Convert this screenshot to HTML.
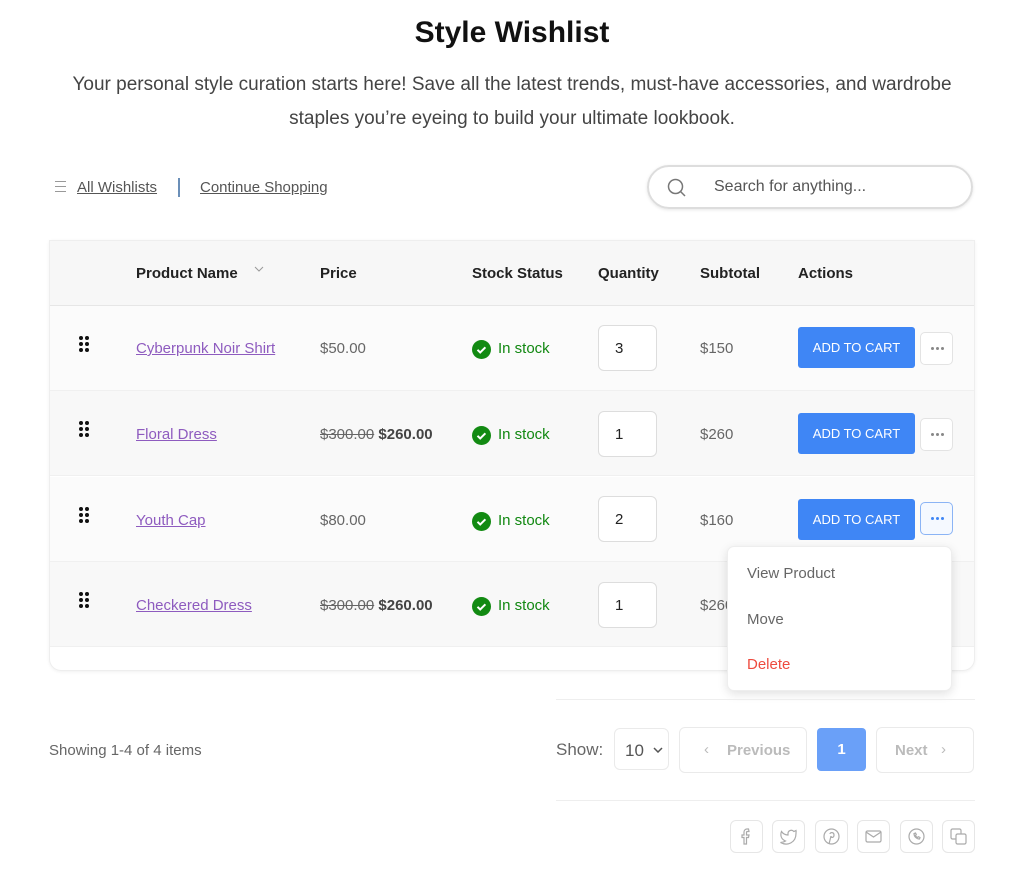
<!DOCTYPE html>
<html><head><meta charset="utf-8"><style>
*{box-sizing:border-box;margin:0;padding:0}
body{width:1024px;height:880px;background:#fff;font-family:"Liberation Sans",sans-serif;color:#333;position:relative;overflow:hidden}
.a{position:absolute}
h1{position:absolute;top:16px;left:0;width:1024px;text-align:center;font-size:30px;font-weight:bold;color:#111}
.sub{top:68px;left:60px;width:904px;text-align:center;font-size:19px;line-height:34px;color:#444}
.nav{top:179px;font-size:15px;color:#555;text-decoration:underline}
.search{left:647px;top:165px;width:326px;height:44px;border:2px solid #ddd;border-radius:22px;box-shadow:0 1px 3px rgba(0,0,0,.1)}
.table{left:49px;top:240px;width:926px;height:431px;border:1px solid #eee;border-radius:0 0 12px 12px;box-shadow:0 1px 3px rgba(0,0,0,.06);overflow:hidden}
.hd{position:absolute;left:0;top:0;width:100%;height:65px;background:#f7f7f7;border-bottom:1px solid #e6e6e6}
.th{position:absolute;top:24px;font-size:15px;font-weight:bold;color:#222}
.row{position:absolute;left:0;width:100%;height:85px;border-bottom:1px solid #f0f0f0}
.c{position:absolute;font-size:15px;color:#666}
.name{color:#8e5bbf;text-decoration:underline}
.ok{color:#118811}
.chk{position:absolute;width:19px;height:19px;border-radius:50%;background:#128a12}
.qty{position:absolute;width:59px;height:46px;border:1px solid #ddd;border-radius:6px;background:#fff;font-size:15px;color:#222;padding:14px 0 0 16px}
.btn{position:absolute;width:117px;height:41px;background:#3f86f5;border-radius:3px;color:#fff;font-size:13px;text-align:center;line-height:41px}
.dots{position:absolute;width:33px;height:33px;border:1px solid #e3e3e3;border-radius:5px;background:#fff}
.dots:before{content:"";position:absolute;left:10px;top:14px;width:3px;height:3px;border-radius:50%;background:#888;box-shadow:5px 0 #888,10px 0 #888}
.dots.on:before{background:#3f86f5;box-shadow:5px 0 #3f86f5,10px 0 #3f86f5}
.grip{position:absolute;width:9px;height:15px}
.grip i{position:absolute;width:4px;height:4px;border-radius:50%;background:#111}
.box{border:1px solid #eaeaea;border-radius:6px;background:#fff}
.soc{position:absolute;top:820px;width:33px;height:33px;border:1px solid #e6e6e6;border-radius:6px}
</style></head><body>
<h1>Style Wishlist</h1>
<div class="a sub">Your personal style curation starts here! Save all the latest trends, must-have accessories, and wardrobe staples you’re eyeing to build your ultimate lookbook.</div>
<div class="a" style="left:55px;top:181px;width:11px;height:11px;border-top:1px solid #999;border-bottom:1px solid #999"><div style="margin-top:4px;border-top:1px solid #999"></div></div>
<div class="a nav" style="left:77px">All Wishlists</div>
<div class="a" style="left:178px;top:178px;width:2px;height:19px;background:#6b8fb8"></div>
<div class="a nav" style="left:200px">Continue Shopping</div>
<div class="a search"><svg class="a" style="left:18px;top:11px" width="20" height="20" viewBox="0 0 20 20" fill="none" stroke="#777" stroke-width="1.5"><circle cx="8.5" cy="8.5" r="7"/><path d="M13.5 13.5L18 18"/></svg><span class="a" style="left:65px;top:11px;font-size:16px;color:#555">Search for anything...</span></div>

<div class="a table">
 <div class="hd">
  <div class="th" style="left:86px">Product Name</div>
  <svg class="a" style="left:204px;top:25px" width="10" height="6" viewBox="0 0 10 6" fill="none" stroke="#999"><path d="M1 1l4 4 4-4"/></svg>
  <div class="th" style="left:270px">Price</div>
  <div class="th" style="left:422px">Stock Status</div>
  <div class="th" style="left:548px">Quantity</div>
  <div class="th" style="left:650px">Subtotal</div>
  <div class="th" style="left:748px">Actions</div>
 </div>
 <div class="row" style="top:65px;background:#fbfbfb">
  <div class="grip" style="left:29px;top:30px"><i style="left:0;top:0"></i><i style="left:6px;top:0"></i><i style="left:0;top:6px"></i><i style="left:6px;top:6px"></i><i style="left:0;top:12px"></i><i style="left:6px;top:12px"></i></div>
  <div class="c name" style="left:86px;top:34px">Cyberpunk Noir Shirt</div>
  <div class="c" style="left:270px;top:34px">$50.00</div>
  <svg class="a" style="left:422px;top:34px" width="19" height="19" viewBox="0 0 19 19"><circle cx="9.5" cy="9.5" r="9.5" fill="#128a12"/><path d="M5.5 9.8l2.7 2.7 5.2-5.2" fill="none" stroke="#fff" stroke-width="2"/></svg><div class="c ok" style="left:448px;top:34px">In stock</div>
  <div class="qty" style="left:548px;top:19px">3</div>
  <div class="c" style="left:650px;top:34px">$150</div>
  <div class="btn" style="left:748px;top:21px">ADD TO CART</div>
  <div class="dots" style="left:870px;top:26px"></div>
 </div>
 <div class="row" style="top:150px;background:#f8f8f8">
  <div class="grip" style="left:29px;top:30px"><i style="left:0;top:0"></i><i style="left:6px;top:0"></i><i style="left:0;top:6px"></i><i style="left:6px;top:6px"></i><i style="left:0;top:12px"></i><i style="left:6px;top:12px"></i></div>
  <div class="c name" style="left:86px;top:35px">Floral Dress</div>
  <div class="c" style="left:270px;top:35px"><s>$300.00</s> <b style="color:#444">$260.00</b></div>
  <svg class="a" style="left:422px;top:35px" width="19" height="19" viewBox="0 0 19 19"><circle cx="9.5" cy="9.5" r="9.5" fill="#128a12"/><path d="M5.5 9.8l2.7 2.7 5.2-5.2" fill="none" stroke="#fff" stroke-width="2"/></svg><div class="c ok" style="left:448px;top:35px">In stock</div>
  <div class="qty" style="left:548px;top:20px">1</div>
  <div class="c" style="left:650px;top:35px">$260</div>
  <div class="btn" style="left:748px;top:22px">ADD TO CART</div>
  <div class="dots" style="left:870px;top:27px"></div>
 </div>
 <div class="row" style="top:236px;background:#fbfbfb">
  <div class="grip" style="left:29px;top:30px"><i style="left:0;top:0"></i><i style="left:6px;top:0"></i><i style="left:0;top:6px"></i><i style="left:6px;top:6px"></i><i style="left:0;top:12px"></i><i style="left:6px;top:12px"></i></div>
  <div class="c name" style="left:86px;top:35px">Youth Cap</div>
  <div class="c" style="left:270px;top:35px">$80.00</div>
  <svg class="a" style="left:422px;top:35px" width="19" height="19" viewBox="0 0 19 19"><circle cx="9.5" cy="9.5" r="9.5" fill="#128a12"/><path d="M5.5 9.8l2.7 2.7 5.2-5.2" fill="none" stroke="#fff" stroke-width="2"/></svg><div class="c ok" style="left:448px;top:35px">In stock</div>
  <div class="qty" style="left:548px;top:19px">2</div>
  <div class="c" style="left:650px;top:35px">$160</div>
  <div class="btn" style="left:748px;top:22px">ADD TO CART</div>
  <div class="dots on" style="left:870px;top:25px;border-color:#8bb4f5;background:#f5f9ff"></div>
 </div>
 <div class="row" style="top:321px;background:#f8f8f8">
  <div class="grip" style="left:29px;top:30px"><i style="left:0;top:0"></i><i style="left:6px;top:0"></i><i style="left:0;top:6px"></i><i style="left:6px;top:6px"></i><i style="left:0;top:12px"></i><i style="left:6px;top:12px"></i></div>
  <div class="c name" style="left:86px;top:35px">Checkered Dress</div>
  <div class="c" style="left:270px;top:35px"><s>$300.00</s> <b style="color:#444">$260.00</b></div>
  <svg class="a" style="left:422px;top:35px" width="19" height="19" viewBox="0 0 19 19"><circle cx="9.5" cy="9.5" r="9.5" fill="#128a12"/><path d="M5.5 9.8l2.7 2.7 5.2-5.2" fill="none" stroke="#fff" stroke-width="2"/></svg><div class="c ok" style="left:448px;top:35px">In stock</div>
  <div class="qty" style="left:548px;top:20px">1</div>
  <div class="c" style="left:650px;top:35px">$260</div>
 </div>
</div>
<div class="a" style="left:727px;top:546px;width:225px;height:145px;background:#fff;border:1px solid #eee;border-radius:7px;box-shadow:0 3px 10px rgba(0,0,0,.12);font-size:15px;color:#666">
 <div class="a" style="left:19px;top:18px">View Product</div>
 <div class="a" style="left:19px;top:64px">Move</div>
 <div class="a" style="left:19px;top:109px;color:#ee4b3f">Delete</div>
</div>
<div class="a" style="left:556px;top:699px;width:419px;border-top:1px solid #eee"></div>
<div class="a" style="left:49px;top:742px;font-size:15px;color:#666">Showing 1-4 of 4 items</div>
<div class="a" style="left:556px;top:740px;font-size:17px;color:#666">Show:</div>
<div class="a box" style="left:614px;top:728px;width:55px;height:42px"><span class="a" style="left:10px;top:12px;font-size:17px;color:#555">10</span><svg class="a" style="left:38px;top:18px" width="10" height="6" viewBox="0 0 10 6" fill="none" stroke="#555" stroke-width="1.5"><path d="M1 1l4 4 4-4"/></svg></div>
<div class="a box" style="left:679px;top:727px;width:128px;height:46px;color:#bbb;font-size:15px;font-weight:bold"><span class="a" style="left:24px;top:13px;font-weight:normal">‹</span><span class="a" style="left:47px;top:14px">Previous</span></div>
<div class="a" style="left:817px;top:728px;width:49px;height:43px;background:#6aa0f8;border-radius:4px;color:#fff;font-weight:bold;font-size:15px;text-align:center;line-height:43px">1</div>
<div class="a box" style="left:876px;top:727px;width:98px;height:46px;color:#bbb;font-size:15px;font-weight:bold"><span class="a" style="left:18px;top:14px">Next</span><span class="a" style="left:64px;top:13px;font-weight:normal">›</span></div>
<div class="a" style="left:556px;top:800px;width:419px;border-top:1px solid #eee"></div>
<div class="soc" style="left:730px"><svg width="31" height="31" viewBox="0 0 31 31" fill="none" stroke="#aaa" stroke-width="1.2"><path d="M17.5 8h-1.5a3 3 0 0 0-3 3v3h-2v2.5h2V23h2.5v-6.5h2l.5-2.5h-2.5v-2.5a1 1 0 0 1 1-1h1.5z"/></svg></div>
<div class="soc" style="left:772px"><svg width="31" height="31" viewBox="0 0 31 31" fill="none" stroke="#aaa" stroke-width="1.2"><path d="M23 9.5a7 7 0 0 1-2.2 1A3.3 3.3 0 0 0 15 13v1a8 8 0 0 1-6.5-3.5s-3 6.5 4 9.5a8.5 8.5 0 0 1-5 1.5c7 4 15.5 0 15.5-9a3.5 3.5 0 0 0 0-.6A5 5 0 0 0 23 9.5z"/></svg></div>
<div class="soc" style="left:815px"><svg width="31" height="31" viewBox="0 0 31 31" fill="none" stroke="#aaa" stroke-width="1.2"><circle cx="15.5" cy="15.5" r="7.5"/><path d="M14 13c0-2 4-2 4 1s-3 3-3 1M15 15l-2 8"/></svg></div>
<div class="soc" style="left:857px"><svg width="31" height="31" viewBox="0 0 31 31" fill="none" stroke="#aaa" stroke-width="1.2"><rect x="8" y="10" width="15" height="11" rx="1.5"/><path d="M8 11l7.5 5 7.5-5"/></svg></div>
<div class="soc" style="left:900px"><svg width="31" height="31" viewBox="0 0 31 31" fill="none" stroke="#aaa" stroke-width="1.2"><circle cx="15.5" cy="15.5" r="7.5"/><path d="M13 12.5c0 3 2.5 5.5 5.5 5.5l.5-1.5-1.5-.8-1 .8a4 4 0 0 1-2-2l.8-1-.8-1.5z"/></svg></div>
<div class="soc" style="left:942px"><svg width="31" height="31" viewBox="0 0 31 31" fill="none" stroke="#aaa" stroke-width="1.2"><rect x="13" y="13" width="10" height="10" rx="1.5"/><path d="M18 13v-3.5a1.5 1.5 0 0 0-1.5-1.5h-7A1.5 1.5 0 0 0 8 9.5v7A1.5 1.5 0 0 0 9.5 18H13"/></svg></div>
</body></html>
